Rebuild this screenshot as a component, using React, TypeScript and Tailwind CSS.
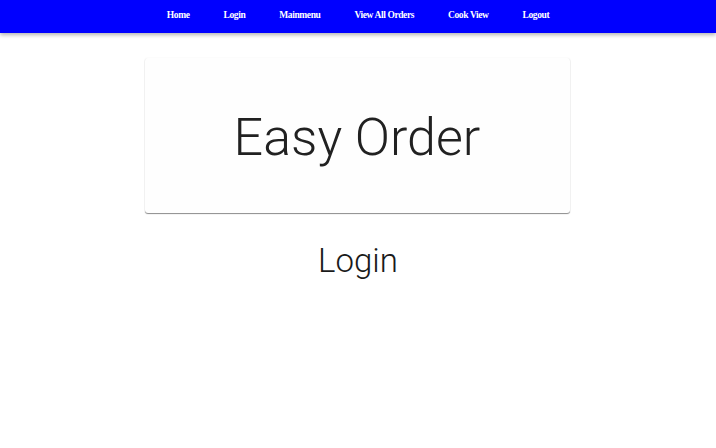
const NAV_LINKS = ['Home', 'Login', 'Mainmenu', 'View All Orders', 'Cook View', 'Logout']

export default function App() {
  return (
    <div className="min-h-screen bg-white font-['Roboto',sans-serif]">
      <nav className="flex h-[33px] items-center justify-center bg-[#0000ff] shadow-[0_2px_4px_rgba(0,0,0,0.3)]">
        {NAV_LINKS.map((label) => (
          <a
            key={label}
            href="#"
            className="px-[17px] pb-[2px] font-['Liberation_Serif',serif] text-[9.5px] font-bold tracking-[-0.4px] text-white"
          >
            {label}
          </a>
        ))}
      </nav>

      <main className="flex flex-col items-center pt-[25px]">
        <div className="mr-[2px] flex h-[155px] w-[425px] items-center justify-center rounded-[3px] bg-[#fefefe] shadow-[0_1px_1px_rgba(0,0,0,0.45),0_0_2px_rgba(0,0,0,0.06)]">
          <h1 className="mt-[4px] text-[52px] font-light leading-none text-[#212121]">Easy Order</h1>
        </div>
        <h2 className="mt-[31px] text-[33px] font-light leading-none text-[#1a1a1a]">Login</h2>
      </main>
    </div>
  )
}
